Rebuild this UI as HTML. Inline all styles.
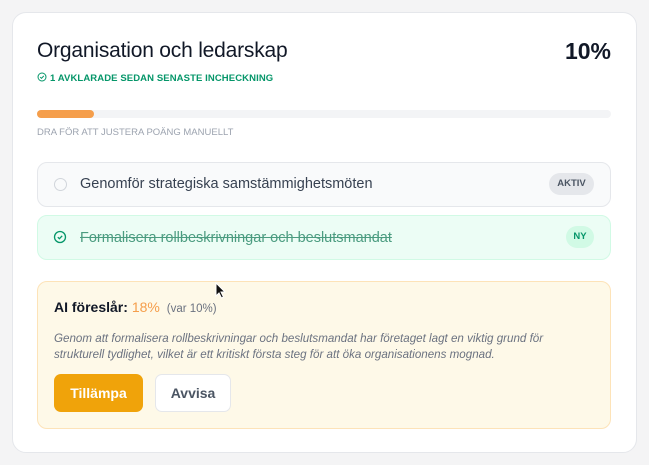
<!DOCTYPE html>
<html><head><meta charset="utf-8"><style>
*{margin:0;padding:0;box-sizing:border-box}
body{width:649px;height:465px;background:#f4f4f5;font-family:"Liberation Sans",sans-serif;position:relative;overflow:hidden}
.card{position:absolute;left:12px;top:12px;width:625px;height:441px;background:#fff;border:1px solid #e5e7eb;border-radius:14px}
.a{position:absolute;white-space:nowrap}
</style></head><body>
<div class="card"></div>
<div class="a" style="left:37px;top:39px;font-size:21px;color:#111827;letter-spacing:-0.2px">Organisation och ledarskap</div>
<div class="a" style="right:38px;top:38px;font-size:23px;font-weight:bold;color:#111827">10%</div>
<div class="a" style="left:37px;top:72px;font-size:9.5px;color:#059669;font-weight:bold;letter-spacing:0.1px"><svg width="10" height="10" viewBox="0 0 10 10" style="vertical-align:-1px;margin-right:3px"><circle cx="5" cy="5" r="4" fill="none" stroke="#059669" stroke-width="1"/><path d="M3.2 5.1l1.3 1.2 2.3-2.4" fill="none" stroke="#059669" stroke-width="1"/></svg>1 AVKLARADE SEDAN SENASTE INCHECKNING</div>
<div class="a" style="left:37px;top:110px;width:574px;height:8px;background:#f3f4f6;border-radius:4px"></div>
<div class="a" style="left:37px;top:110px;width:57px;height:8px;background:#f59e4b;border-radius:4px"></div>
<div class="a" style="left:37px;top:127px;font-size:9.5px;color:#9ca3af">DRA FÖR ATT JUSTERA POÄNG MANUELLT</div>
<div class="a" style="left:37px;top:162px;width:574px;height:45px;background:#f9fafb;border:1px solid #e5e7eb;border-radius:10px"></div>
<div class="a" style="left:54px;top:178px;width:13px;height:13px;border:1.5px solid #d1d5db;border-radius:50%"></div>
<div class="a" style="left:80px;top:176px;font-size:14.5px;color:#374151">Genomför strategiska samstämmighetsmöten</div>
<div class="a" style="left:549px;top:173px;width:45px;height:22px;background:#e5e7eb;border-radius:11px;font-size:9.5px;font-weight:bold;color:#4b5563;text-align:center;line-height:22px">AKTIV</div>
<div class="a" style="left:37px;top:215px;width:574px;height:45px;background:#ecfdf5;border:1px solid #d1fae5;border-radius:10px"></div>
<svg class="a" style="left:53px;top:230px" width="14" height="14" viewBox="0 0 14 14"><circle cx="7" cy="7" r="5.5" fill="none" stroke="#059669" stroke-width="1.3"/><path d="M4.8 7.2l1.6 1.5 2.8-2.9" fill="none" stroke="#059669" stroke-width="1.3"/></svg>
<div class="a" style="left:80px;top:230px;font-size:14.5px;color:#4b9c80;text-decoration:line-through">Formalisera rollbeskrivningar och beslutsmandat</div>
<div class="a" style="left:566px;top:226px;width:28px;height:22px;background:#d1fae5;border-radius:11px;font-size:9.5px;font-weight:bold;color:#059669;text-align:center;line-height:22px">NY</div>
<div class="a" style="left:37px;top:281px;width:574px;height:148px;background:#fef9e8;border:1px solid #fde3b8;border-radius:10px"></div>
<div class="a" style="left:54px;top:299px;font-size:14px;color:#111827"><b>AI föreslår:</b> <span style="color:#f59e4b">18%</span> <span style="font-size:11.5px;color:#6b7280;margin-left:3px">(var 10%)</span></div>
<div class="a" style="left:54px;top:331px;font-size:11.6px;line-height:16px;color:#6b7280;font-style:italic">Genom att formalisera rollbeskrivningar och beslutsmandat har företaget lagt en viktig grund för<br>strukturell tydlighet, vilket är ett kritiskt första steg för att öka organisationens mognad.</div>
<div class="a" style="left:54px;top:374px;width:89px;height:38px;background:#f0a30a;border-radius:7px;color:#fff;font-size:14px;font-weight:bold;text-align:center;line-height:38px">Tillämpa</div>
<div class="a" style="left:155px;top:374px;width:76px;height:38px;background:#fff;border:1px solid #e5e7eb;border-radius:7px;color:#4b5563;font-size:14px;font-weight:bold;text-align:center;line-height:36px">Avvisa</div>
<svg class="a" style="left:215px;top:282px" width="12" height="18" viewBox="0 0 12 18"><path d="M1 1v13l3-3 2.5 5 2-1-2.5-5h4z" fill="#111" stroke="#fff" stroke-width="1"/></svg>
</body></html>
